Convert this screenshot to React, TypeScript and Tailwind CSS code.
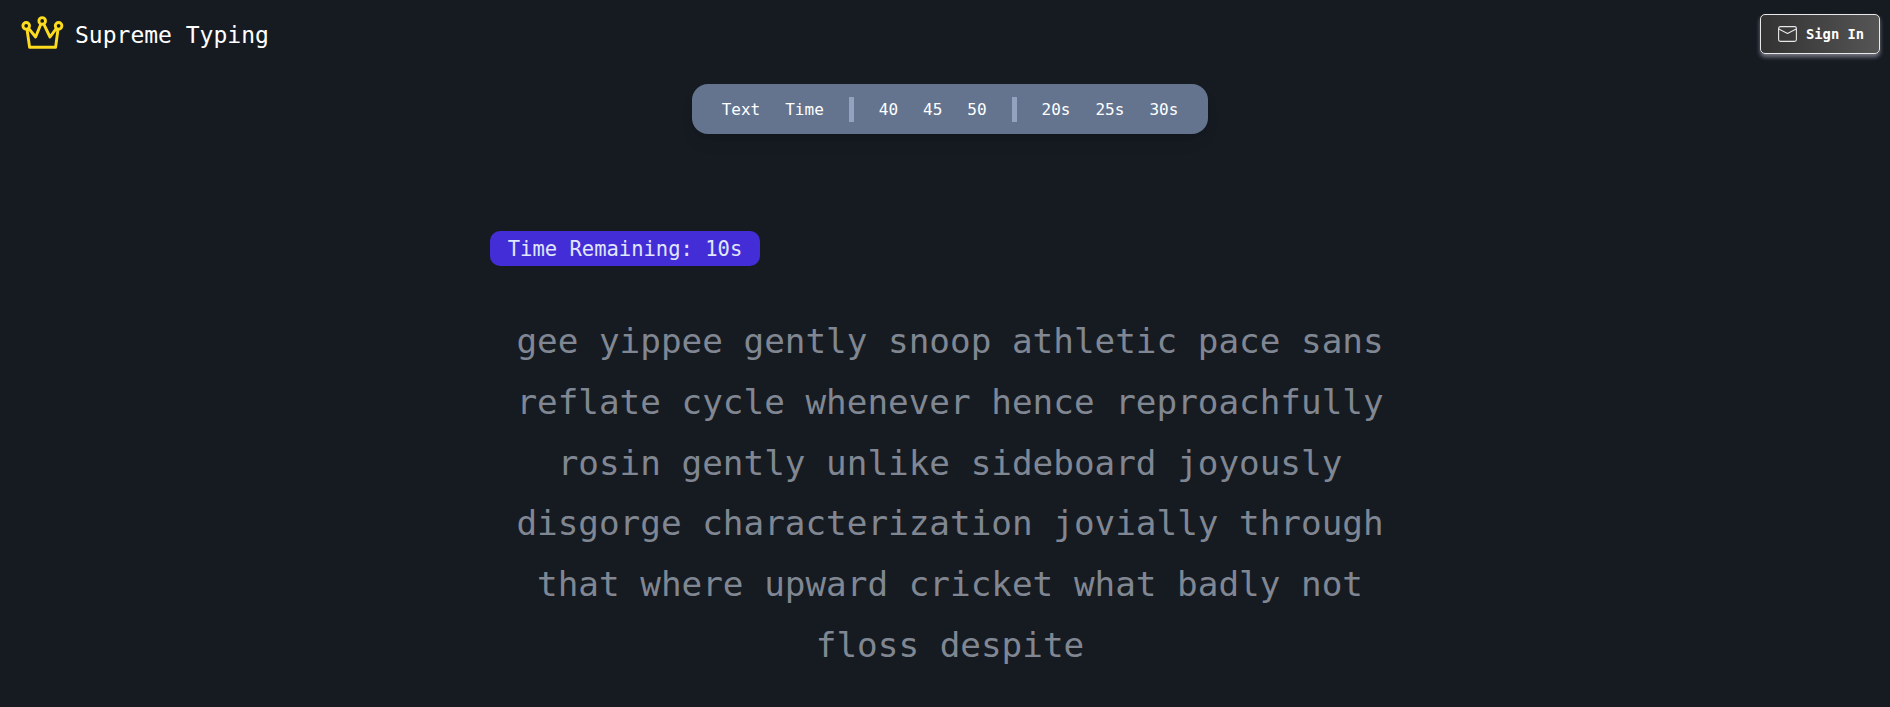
const lines = [
  'gee yippee gently snoop athletic pace sans',
  'reflate cycle whenever hence reproachfully',
  'rosin gently unlike sideboard joyously',
  'disgorge characterization jovially through',
  'that where upward cricket what badly not',
  'floss despite',
];

const modes = ['Text', 'Time'];
const counts = ['40', '45', '50'];
const durations = ['20s', '25s', '30s'];

function Crown() {
  return (
    <svg width="44" height="36" viewBox="20 14 44 36" fill="none" stroke="#fddc1f" strokeWidth="2.9" strokeLinejoin="round">
      <circle cx="26.2" cy="25.8" r="3.3" />
      <circle cx="42.2" cy="20.9" r="3.3" />
      <circle cx="58.6" cy="25.8" r="3.3" />
      <path d="M27 29.2 29.6 47.3H55.6L58 29.2M28.6 28.4 35.6 37 40.8 24.2M43.8 24.2 50 37 56.4 28.4" />
    </svg>
  );
}

function Envelope() {
  return (
    <svg width="19" height="16" viewBox="0 0 19 16" fill="none" stroke="#e8e8e8" strokeWidth="1.1" strokeLinejoin="round">
      <rect x="0.6" y="0.6" width="17.8" height="14.8" rx="1.8" />
      <path d="M0.8 3 9.5 7.4 18.2 3" />
    </svg>
  );
}

function Options({ items }: { items: string[] }) {
  return (
    <>
      {items.map((item) => (
        <button key={item} className="pt-0.5">
          {item}
        </button>
      ))}
    </>
  );
}

export default function App() {
  return (
    <div className="flex h-[707px] flex-col bg-[#161b22] font-['DejaVu_Sans_Mono',monospace]">
      <header className="flex h-[68px] items-center justify-between pl-5 pr-2.5">
        <div className="flex items-center gap-[11px] pb-1">
          <Crown />
          <h1 className="pt-1.5 text-[23px] leading-[30px] text-white">Supreme Typing</h1>
        </div>
        <button className="flex h-10 w-[120px] items-center gap-[9px] rounded-[5px] border border-[#e8e8e8] bg-linear-to-r from-[#333] to-[#555] pl-[17px] text-[13.8px] font-bold text-white shadow-[0_3px_4px_rgba(215,210,230,0.5)]">
          <Envelope />
          <span>Sign In</span>
        </button>
      </header>
      <nav className="mt-4 ml-[10px] flex h-[50px] w-[516px] items-center justify-center gap-[25px] self-center rounded-2xl bg-[#64748f] text-[16px] text-white shadow-lg">
        <Options items={modes} />
        <div className="h-[25px] w-[5px] bg-[#93a3bf]" />
        <Options items={counts} />
        <div className="h-[25px] w-[5px] bg-[#93a3bf]" />
        <Options items={durations} />
      </nav>
      <main className="mt-[97px] ml-[10px] flex w-[920px] flex-col self-center">
        <div className="flex h-[35px] w-[270px] items-center justify-center self-start rounded-[10px] bg-[#432dd7] pt-0.5 text-[20.5px] text-[#e0e7ff]">
          Time Remaining: 10s
        </div>
        <div className="mt-[45px] text-center text-[34.3px] leading-[60.8px] text-[#808792]">
          {lines.map((line) => (
            <p key={line}>{line}</p>
          ))}
        </div>
      </main>
    </div>
  );
}
